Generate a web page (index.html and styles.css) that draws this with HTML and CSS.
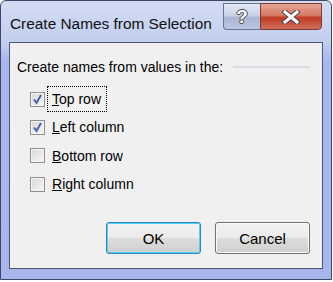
FILE: index.html
```html
<!DOCTYPE html>
<html>
<head>
<meta charset="utf-8">
<link rel="stylesheet" href="styles.css">
</head>
<body>
<div class="window">
  <div class="titlebar">
    <span class="title">Create Names from Selection</span>
    <div class="caption-buttons">
      <div class="cap-btn help">?</div>
      <div class="cap-btn close">
        <svg width="20" height="14" viewBox="0 0 20 14"><path d="M4 2 L16 12 M16 2 L4 12" stroke="#4a4a4a" stroke-width="5" stroke-linecap="square"/><path d="M4 2 L16 12 M16 2 L4 12" stroke="#ffffff" stroke-width="3" stroke-linecap="square"/></svg>
      </div>
    </div>
  </div>
  <div class="client">
    <div class="group-head">
      <span class="group-label">Create names from values in the:</span>
      <span class="group-line"></span>
    </div>
    <div class="options">
      <label class="opt"><span class="box checked"><svg width="11" height="11" viewBox="0 0 11 11"><path d="M2 5.5 L4.5 9 L9 1" fill="none" stroke="#4a5fb0" stroke-width="2"/></svg></span><span class="opt-text focus"><u>T</u>op row</span></label>
      <label class="opt"><span class="box checked"><svg width="11" height="11" viewBox="0 0 11 11"><path d="M2 5.5 L4.5 9 L9 1" fill="none" stroke="#4a5fb0" stroke-width="2"/></svg></span><span class="opt-text"><u>L</u>eft column</span></label>
      <label class="opt"><span class="box"></span><span class="opt-text"><u>B</u>ottom row</span></label>
      <label class="opt"><span class="box"></span><span class="opt-text"><u>R</u>ight column</span></label>
    </div>
    <div class="buttons">
      <button class="btn default">OK</button>
      <button class="btn">Cancel</button>
    </div>
  </div>
</div>
</body>
</html>
```
FILE: styles.css
```css
html, body {
  margin: 0;
  padding: 0;
  background: #ffffff;
}
body {
  font-family: "Liberation Sans", Arial, sans-serif;
  width: 333px;
  height: 282px;
  overflow: hidden;
}
.window {
  box-sizing: border-box;
  width: 332px;
  height: 280px;
  border: 1px solid #3d4766;
  border-radius: 6px 6px 0 0;
  background: linear-gradient(to bottom, #d3dcf3 0px, #c3cff0 40px, #a9b8ec 60px, #a6b5ea 100%);
  display: flex;
  flex-direction: column;
  padding: 0 8px 10px 8px;
}
.titlebar {
  height: 41px;
  display: flex;
  justify-content: space-between;
  align-items: flex-start;
  flex-shrink: 0;
}
.title {
  font-size: 15.4px;
  color: #111;
  margin-top: 14px;
  margin-left: 1px;
}
.caption-buttons {
  display: flex;
  margin-right: 1px;
  margin-top: 2px;
}
.cap-btn {
  height: 27px;
  box-sizing: border-box;
  border: 1px solid #6a7490;
  display: flex;
  align-items: center;
  justify-content: center;
}
.help {
  width: 37px;
  border-radius: 0 0 0 4px;
  border-right: none;
  background: linear-gradient(to bottom, #e4e9f5 0%, #c9d2e8 45%, #aab6d4 55%, #bcc6e2 100%);
  color: #fff;
  font-weight: bold;
  font-size: 19px;
  text-shadow: 1px 0 #444, -1px 0 #444, 0 1px #444, 0 -1px #444;
}
.close {
  width: 62px;
  border-radius: 0 0 4px 0;
  border-color: #7a3b30;
  background: linear-gradient(to bottom, #e8a593 0%, #d67a66 45%, #c03a22 55%, #d0705c 100%);
}
.client {
  flex: 1;
  background: #f0f0f0;
  border: 1px solid #4e5570;
  display: flex;
  flex-direction: column;
  padding: 0 12px 0 7px;
}
.group-head {
  display: flex;
  align-items: center;
  margin-top: 16px;
}
.group-label {
  font-size: 14px;
  color: #000;
}
.group-line {
  flex: 1;
  height: 2px;
  background: #d6dde6;
  margin-left: 10px;
}
.options {
  display: flex;
  flex-direction: column;
  margin-top: 10px;
  padding-left: 13px;
}
.opt {
  display: flex;
  align-items: center;
  height: 28.3px;
  font-size: 14px;
}
.box {
  box-sizing: border-box;
  width: 15px;
  height: 15px;
  border: 1px solid #8e8f8f;
  background: linear-gradient(135deg, #d6d6d6 0%, #ebebeb 60%, #f5f5f5 100%);
  box-shadow: inset 0 0 0 1px #f4f4f4;
  display: flex;
  align-items: center;
  justify-content: center;
  margin-right: 7px;
}
.opt-text u {
  text-decoration-thickness: 1px;
}
.focus {
  outline: 1px dotted #000;
  outline-offset: 4px;
  padding-right: 1px;
}
.buttons {
  display: flex;
  justify-content: flex-end;
  gap: 14px;
  margin-top: auto;
  margin-bottom: 14px;
}
.btn {
  width: 95px;
  height: 32px;
  font-family: "Liberation Sans", Arial, sans-serif;
  font-size: 15px;
  color: #000;
  border: 1px solid #707070;
  border-radius: 3px;
  background: linear-gradient(to bottom, #f2f2f2 0%, #ebebeb 50%, #dddddd 51%, #cfcfcf 100%);
  box-shadow: inset 0 0 0 1px #fbfbfb;
  padding: 0;
}
.btn.default {
  border-color: #3c7fb1;
  box-shadow: inset 0 0 0 1px #48d6f8;
}
```
